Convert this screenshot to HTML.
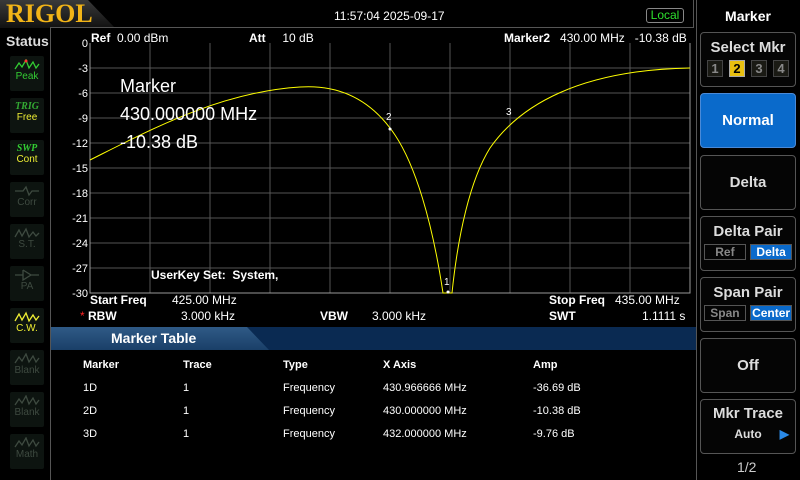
<!DOCTYPE html>
<html><head><style>
*{margin:0;padding:0;box-sizing:border-box}
body{width:800px;height:480px;background:#000;overflow:hidden;position:relative;font-family:"Liberation Sans",sans-serif;color:#fff}
.a{position:absolute;white-space:nowrap}
.st{position:absolute;left:10px;width:34px;height:35px;background:#0d1410;border-radius:2px;text-align:center;font-size:10px;color:#3e4a40}
.st svg{display:block;margin:3px auto 0}
.btn{position:absolute;left:700px;width:96px;border:1px solid #555;border-radius:4px;background:#050505;text-align:center;font-weight:bold;color:#ddd;font-size:15px}
.sm{display:inline-block;border:1px solid #555;font-size:12px;height:16px;line-height:14px}
.mk{display:inline-block;width:16px;height:17px;border:1px solid #444;background:#1a1a14;color:#888;font-size:13px;line-height:15px;margin:0 3px}
</style></head><body>
<div class="a" style="left:0;top:0;width:115px;height:28px;background:linear-gradient(#3a3a3a,#111);clip-path:polygon(0 0,88px 0,115px 28px,0 28px)"></div>
<div class="a" style="left:6px;top:-1px;font-family:'Liberation Serif',serif;font-weight:bold;font-size:26px;color:#f2b417">RIGOL</div>
<div class="a" style="left:50px;top:27px;width:644px;height:1px;background:#555"></div>
<div class="a" style="left:693px;top:0;width:1px;height:28px;background:#555"></div>
<div class="a" style="left:334px;top:9px;font-size:12px">11:57:04 2025-09-17</div>
<div class="a" style="left:646px;top:8px;width:38px;height:15px;border:1px solid #888;border-radius:3px;color:#2ee02e;font-size:12px;text-align:center;line-height:13px">Local</div>
<div class="a" style="left:50px;top:28px;width:1px;height:452px;background:#555"></div>
<div class="a" style="left:6px;top:33px;font-size:14px;font-weight:bold;color:#ddd">Status</div>
<div class="st" style="top:56px;color:#3c3"><svg width="26" height="12"><polyline points="1,10 5,4 8,8 12,1 15,9 19,3 22,9 25,5" fill="none" stroke="#3c3" stroke-width="1.3"/><circle cx="12" cy="2" r="1.5" fill="#f33"/></svg>Peak</div>
<div class="st" style="top:98px;color:#ee3"><div style="font-family:'Liberation Serif',serif;font-style:italic;font-weight:bold;color:#3a3;font-size:10px;margin-top:3px">TRIG</div>Free</div>
<div class="st" style="top:140px;color:#ee3"><div style="font-family:'Liberation Serif',serif;font-style:italic;font-weight:bold;color:#3c3;font-size:10px;margin-top:3px">SWP</div>Cont</div>
<div class="st" style="top:182px"><svg width="26" height="12"><polyline points="1,6 9,6 12,2 15,10 18,6 25,6" fill="none" stroke="#3e4a40" stroke-width="1.3"/></svg>Corr</div>
<div class="st" style="top:224px"><svg width="26" height="12"><polyline points="1,10 5,3 8,9 12,2 15,10 19,5 22,9 25,6" fill="none" stroke="#3e4a40" stroke-width="1.3"/></svg>S.T.</div>
<div class="st" style="top:266px"><svg width="26" height="12"><path d="M1 6H9M9 1V11L17 6L9 1M17 6H25" fill="none" stroke="#3e4a40" stroke-width="1.3"/></svg>PA</div>
<div class="st" style="top:308px;color:#ee3"><svg width="26" height="12"><polyline points="1,10 5,3 8,9 12,2 15,10 19,4 22,9 25,5" fill="none" stroke="#ee3" stroke-width="1.3"/></svg>C.W.</div>
<div class="st" style="top:350px"><svg width="26" height="12"><polyline points="1,10 5,4 8,8 12,1 15,9 19,3 22,9 25,5" fill="none" stroke="#3e4a40" stroke-width="1.3"/></svg>Blank</div>
<div class="st" style="top:392px"><svg width="26" height="12"><polyline points="1,10 5,4 8,8 12,1 15,9 19,3 22,9 25,5" fill="none" stroke="#3e4a40" stroke-width="1.3"/></svg>Blank</div>
<div class="st" style="top:434px"><svg width="26" height="12"><polyline points="1,10 5,4 8,8 12,1 15,9 19,3 22,9 25,5" fill="none" stroke="#3e4a40" stroke-width="1.3"/></svg>Math</div>
<svg class="a" style="left:0;top:0" width="800" height="480">
<g stroke="#555" stroke-width="1">
<path d="M90 68H690M90 93H690M90 118H690M90 143H690M90 168H690M90 193H690M90 218H690M90 243H690M90 268H690"/>
<path d="M150 43V293M210 43V293M270 43V293M330 43V293M390 43V293M450 43V293M510 43V293M570 43V293M630 43V293"/>
</g>
<path d="M90 43V293H690V43" fill="none" stroke="#999"/>
<path fill="none" stroke="#ff0" stroke-width="1" d="M90 160 C150 130 220 92 300 87 C345 84 375 105 395 135 C415 165 432 220 443 293 L452 293 C458 235 470 180 490 148 C520 105 580 70 690 68"/>
<text x="386" y="120" fill="#fff" font-size="10" font-family="Liberation Sans">2</text>
<text x="506" y="115" fill="#fff" font-size="10" font-family="Liberation Sans">3</text>
<text x="444" y="285" fill="#fff" font-size="10" font-family="Liberation Sans">1</text>
<circle cx="390" cy="129" r="1.5" fill="#fff"/><circle cx="448" cy="292" r="1.5" fill="#fff"/>
<g fill="#fff" font-size="11" font-family="Liberation Sans" text-anchor="end">
<text x="88" y="47">0</text><text x="88" y="72">-3</text><text x="88" y="97">-6</text><text x="88" y="122">-9</text><text x="88" y="147">-12</text><text x="88" y="172">-15</text><text x="88" y="197">-18</text><text x="88" y="222">-21</text><text x="88" y="247">-24</text><text x="88" y="272">-27</text><text x="88" y="297">-30</text>
</g>
</svg>
<div class="a" style="left:91px;top:31px;font-size:12px"><b>Ref</b> &nbsp;0.00 dBm</div>
<div class="a" style="left:249px;top:31px;font-size:12px"><b>Att</b> &nbsp;&nbsp;&nbsp;&nbsp;10 dB</div>
<div class="a" style="left:504px;top:31px;font-size:12px"><b>Marker2</b> &nbsp;&nbsp;430.00 MHz &nbsp;&nbsp;-10.38 dB</div>
<div class="a" style="left:120px;top:72px;font-size:18px;line-height:28px">Marker<br>430.000000 MHz<br>-10.38 dB</div>
<div class="a" style="left:151px;top:268px;font-size:12px;font-weight:bold">UserKey Set: &nbsp;System,</div>
<div class="a" style="left:90px;top:293px;font-size:12px"><b>Start Freq</b></div>
<div class="a" style="left:172px;top:293px;font-size:12px">425.00 MHz</div>
<div class="a" style="left:549px;top:293px;font-size:12px"><b>Stop Freq</b></div>
<div class="a" style="left:615px;top:293px;font-size:12px">435.00 MHz</div>
<div class="a" style="left:80px;top:309px;font-size:12px"><span style="color:#f22">*</span> <b>RBW</b></div>
<div class="a" style="left:181px;top:309px;font-size:12px">3.000 kHz</div>
<div class="a" style="left:320px;top:309px;font-size:12px"><b>VBW</b></div>
<div class="a" style="left:372px;top:309px;font-size:12px">3.000 kHz</div>
<div class="a" style="left:549px;top:309px;font-size:12px"><b>SWT</b></div>
<div class="a" style="left:642px;top:309px;font-size:12px">1.1111 s</div>
<div class="a" style="left:51px;top:327px;width:645px;height:23px;background:#0a2a52"></div>
<div class="a" style="left:51px;top:327px;width:218px;height:23px;background:linear-gradient(#2f5a86,#1a3f68);clip-path:polygon(0 0,196px 0,218px 23px,0 23px)"></div>
<div class="a" style="left:111px;top:330px;font-size:14px;font-weight:bold">Marker Table</div>
<div class="a" style="left:83px;top:359px;font-size:11px;font-weight:bold">Marker</div>
<div class="a" style="left:183px;top:359px;font-size:11px;font-weight:bold">Trace</div>
<div class="a" style="left:283px;top:359px;font-size:11px;font-weight:bold">Type</div>
<div class="a" style="left:383px;top:359px;font-size:11px;font-weight:bold">X Axis</div>
<div class="a" style="left:533px;top:359px;font-size:11px;font-weight:bold">Amp</div>
<div class="a" style="left:83px;top:377px;font-size:11px;line-height:23px">1D<br>2D<br>3D</div>
<div class="a" style="left:183px;top:377px;font-size:11px;line-height:23px">1<br>1<br>1</div>
<div class="a" style="left:283px;top:377px;font-size:11px;line-height:23px">Frequency<br>Frequency<br>Frequency</div>
<div class="a" style="left:383px;top:377px;font-size:11px;line-height:23px">430.966666 MHz<br>430.000000 MHz<br>432.000000 MHz</div>
<div class="a" style="left:533px;top:377px;font-size:11px;line-height:23px">-36.69 dB<br>-10.38 dB<br>-9.76 dB</div>
<div class="a" style="left:696px;top:0;width:1px;height:480px;background:#555"></div>
<div class="a" style="left:696px;top:8px;width:104px;text-align:center;font-size:14px;font-weight:bold">Marker</div>
<div class="btn" style="top:32px;height:55px"><div style="margin-top:6px">Select Mkr</div>
<div style="margin-top:4px"><span class="mk">1</span><span class="mk" style="background:#e8c010;color:#000;border-color:#aaa">2</span><span class="mk">3</span><span class="mk">4</span></div></div>
<div class="btn" style="top:93px;height:55px;background:#0a6acb;border-color:#4a8ad8;color:#fff;line-height:53px">Normal</div>
<div class="btn" style="top:155px;height:55px;line-height:53px">Delta</div>
<div class="btn" style="top:216px;height:55px"><div style="margin-top:6px">Delta Pair</div><div style="margin-top:3px"><span class="sm" style="width:42px;color:#888">Ref</span> <span class="sm" style="width:42px;background:#0a6acb;color:#fff">Delta</span></div></div>
<div class="btn" style="top:277px;height:55px"><div style="margin-top:6px">Span Pair</div><div style="margin-top:3px"><span class="sm" style="width:42px;color:#888">Span</span> <span class="sm" style="width:42px;background:#0a6acb;color:#fff">Center</span></div></div>
<div class="btn" style="top:338px;height:55px;line-height:53px">Off</div>
<div class="btn" style="top:399px;height:55px"><div style="margin-top:5px">Mkr Trace</div><div style="margin-top:5px;font-size:12px">Auto <span style="color:#2a8ae8;position:absolute;right:6px">&#9654;</span></div></div>
<div class="a" style="left:737px;top:459px;font-size:14px;color:#ccc">1/2</div>
</body></html>
